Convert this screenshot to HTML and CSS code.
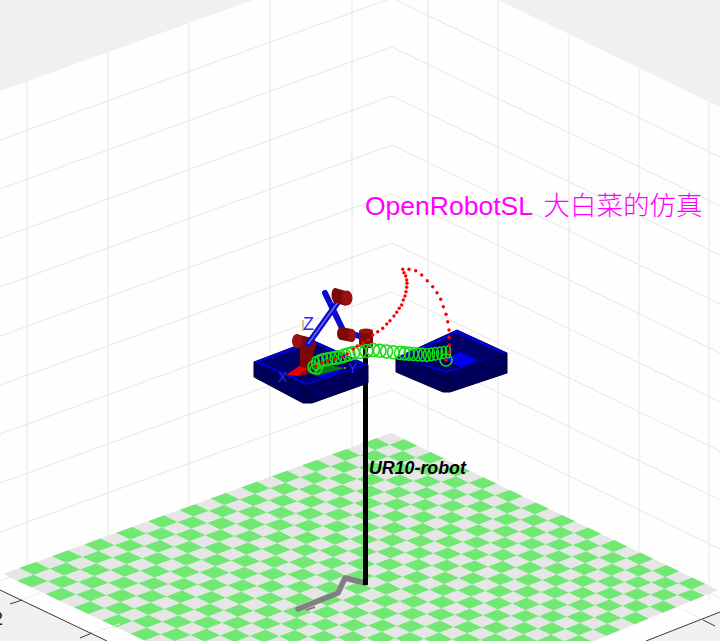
FILE: index.html
```html
<!DOCTYPE html>
<html>
<head>
    <title>OpenRobotSL</title>
    <link rel="stylesheet" href="styles.css">
</head>
<body>
    <svg class="plot" width="720" height="641" viewBox="0 0 720 641">
        <!-- grey outside of the axes box -->
        <polygon class="outside" points="0,0 253,0 0,91"/>
        <polygon class="outside" points="498,0 720,0 720,107"/>
        <polygon class="outside" points="0,590 107,641 0,641"/>
        <polygon class="outside" points="646,641 720,612 720,641"/>

        <g id="grid"></g>
        <g id="floor"></g>

        <!-- axis lines and ticks -->
        <line class="floor-grid" x1="22" y1="600" x2="40" y2="593"/>
        <line class="floor-grid" x1="92" y1="633" x2="120" y2="624"/>
        <line class="floor-grid" x1="703" y1="620" x2="683" y2="609"/>
        <line class="axis" x1="0" y1="590" x2="107" y2="641"/>
        <line class="axis" x1="10" y1="604" x2="22" y2="600"/>
        <line class="axis" x1="80" y1="638" x2="92" y2="633"/>
        <line class="axis" x1="646" y1="641" x2="720" y2="612"/>
        <line class="axis" x1="703" y1="620" x2="715" y2="626"/>
        <text class="tick-label" x="-7.5" y="625">2</text>

        <!-- shadow and pole -->
        <polyline class="shadow" points="298,609 338,593 345,578 365,583"/>
        <line class="shadow-foot" x1="306" y1="610" x2="315" y2="607"/>
        <rect class="pole" x="363" y="345" width="5" height="240"/>
        <text class="robot-label" x="369" y="474">UR10-robot</text>

        <!-- right tray -->
        <polygon class="tray-side" points="396,358 457,330 507,353 507,373 450,392 443,392 396,372"/>
        <polygon class="tray-rim" points="396,358 452,333 457,330 507,353 448,373 445,373"/>
        <polygon class="tray-inner" points="402,358.5 457,333 503,353.5 447,371"/>
        <polygon class="tray-bottom" points="445,359 460,352 478,360 460,367"/>
        <polyline class="tray-edge" points="396,358 445,373 445,392"/>
        <polyline class="tray-edge" points="448,373 448,392"/>
        <polyline class="tray-edge" points="448,373 507,353"/>

        <!-- left tray -->
        <polygon class="tray-side" points="254,362 312,340 368,365 368,383 312,403 303,403 254,377"/>
        <polygon class="tray-rim" points="254,362 312,340 368,365 308,385 305,385"/>
        <polygon class="tray-inner" points="260,362 313,343 362,365 307,383"/>
        <polygon class="tray-bottom" points="312,373 330,366 345,369 322,378"/>
        <polyline class="tray-edge" points="254,362 305,385 305,403"/>
        <polyline class="tray-edge" points="308,385 308,403"/>
        <polyline class="tray-edge" points="308,385 368,365"/>

        <!-- robot -->
        <polygon class="cone" points="286,375 305,362 312,373 298,376"/>
        <polygon class="cone-shade" points="298,376 309,367 312,373"/>
        <rect class="link-dark" x="300" y="345" width="13" height="21"/>
        <ellipse class="link-dark" cx="306" cy="365" rx="6.5" ry="3"/>
        <line class="z-stem" x1="303" y1="320" x2="303" y2="331"/>
        <polygon class="link-dark" points="296,334 312,338 312,352 296,348"/>
        <ellipse class="link" cx="297" cy="341" rx="5" ry="7"/>
        <ellipse class="link-dark" cx="312" cy="345" rx="4" ry="7"/>
        <line class="arm" x1="325" y1="293" x2="342" y2="328"/>
        <line class="arm" x1="308" y1="344" x2="338" y2="302"/>
        <line class="arm-light" x1="308" y1="344" x2="338" y2="302"/>
        <polygon class="link-dark" points="335,288 346,291 346,306 333,302"/>
        <ellipse class="link" cx="347" cy="298" rx="5.5" ry="7.5"/>
        <ellipse class="link-dark" cx="335" cy="295" rx="3.5" ry="7"/>
        <line class="arm" x1="350" y1="333" x2="362" y2="337"/>
        <polygon class="link-dark" points="341,327 352,329 352,342 341,340"/>
        <ellipse class="link-dark" cx="341" cy="333.5" rx="4" ry="6.5"/>
        <ellipse class="link" cx="352" cy="335.5" rx="4" ry="6.5"/>
        <rect class="link-dark" x="359" y="331" width="14" height="15"/>
        <ellipse class="link-dark" cx="366" cy="346" rx="7" ry="2.5"/>
        <ellipse class="link" cx="366" cy="331" rx="7" ry="2.5"/>

        <polygon class="tool" points="312,362 345,368 316,376"/>
        <circle class="tool-tip" cx="345" cy="368" r="1"/>
        <g id="trail"></g>

        <text class="axis-mark" x="303" y="330">Z</text>
        <text class="axis-mark axis-mark-small" x="348" y="373">Y</text>
        <text class="axis-mark axis-mark-small" x="278" y="382">X</text>

        <text class="title" x="365" y="215">OpenRobotSL<tspan class="title-cjk" x="543.5">大白菜的仿真</tspan></text>
    </svg>
    <script src="script.js"></script>
</body>
</html>
```

FILE: styles.css
```css
body {
    margin: 0;
    background-color: #fefefe;
    overflow: hidden;
}
.plot {
    display: block;
}
.outside {
    fill: #f0f0f0;
}
.grid-line {
    stroke: #e6e6e6;
    stroke-width: 1;
    fill: none;
}
.floor-grid {
    stroke: #ececec;
    stroke-width: 1;
}
.tile-light {
    fill: #e6e6e6;
}
.tile-green {
    fill: #70e873;
}
.axis {
    stroke: #3a3a3a;
    stroke-width: 1;
}
.tick-label {
    font-family: "Liberation Sans", Arial, sans-serif;
    font-size: 19px;
    fill: #262626;
}
.shadow {
    fill: none;
    stroke: #808080;
    stroke-width: 5.5;
    stroke-linejoin: round;
    stroke-linecap: round;
}
.shadow-foot {
    stroke: #808080;
    stroke-width: 2;
}
.pole {
    fill: #000000;
}
.robot-label {
    font-family: "Liberation Sans", Arial, sans-serif;
    font-size: 17.8px;
    font-weight: bold;
    font-style: italic;
    fill: #000000;
}
.tray-side {
    fill: #00005c;
    stroke: #00002e;
    stroke-width: 1;
}
.tray-rim {
    fill: #0000e6;
}
.tray-inner {
    fill: #000068;
}
.tray-bottom {
    fill: #0000f0;
}
.tray-edge {
    fill: none;
    stroke: #000030;
    stroke-width: 1;
}
.link {
    fill: #9c1010;
}
.link-dark {
    fill: #7c0808;
}
.cone {
    fill: #e80000;
}
.cone-shade {
    fill: #8a0000;
}
.arm {
    stroke: #0a0ac8;
    stroke-width: 6;
    stroke-linecap: round;
}
.arm-light {
    stroke: #6a6aff;
    stroke-width: 1.5;
}
.z-stem {
    stroke: #d8b060;
    stroke-width: 1.5;
}
.tool {
    fill: #0c7a12;
}
.tool-tip {
    fill: #e08020;
}
.ring {
    fill: none;
    stroke: #14dc14;
    stroke-width: 1.6;
}
.dot {
    fill: #ff0000;
}
.axis-mark {
    font-family: "Liberation Sans", Arial, sans-serif;
    font-size: 18px;
    fill: #2a2aff;
}
.axis-mark-small {
    font-size: 14px;
}
.title {
    font-family: "Liberation Sans", "Noto Sans CJK SC", sans-serif;
    font-size: 26.5px;
    fill: #ff00ff;
}
.title-cjk {
    font-family: "Noto Sans CJK SC", sans-serif;
    font-size: 26.5px;
    font-weight: 300;
}
```

FILE: script.js
```js
const NS = 'http://www.w3.org/2000/svg';

function add(parent, tag, attrs) {
    const el = document.createElementNS(NS, tag);
    for (const key in attrs) {
        el.setAttribute(key, attrs[key]);
    }
    parent.appendChild(el);
    return el;
}

// walls: horizontal lines meet in a chevron at x=392, 49px apart
const grid = document.getElementById('grid');
for (let k = 1; k <= 10; k++) {
    const y = -51 + 49 * k;
    add(grid, 'polyline', {
        class: 'grid-line',
        points: `0,${y + 142} 392,${y} 720,${y + 159}`
    });
}
[27, 108, 189, 270, 352].forEach(x => {
    add(grid, 'line', { class: 'grid-line', x1: x, y1: 91 - x * 0.36, x2: x, y2: 580 });
});
[428, 498, 569, 639, 709].forEach(x => {
    add(grid, 'line', { class: 'grid-line', x1: x, y1: (x - 392) * 0.484 - 51, x2: x, y2: 600 });
});

// floor: 25x25 checker mapped onto the four corners with a homography
const L = [3, 574], B = [391, 433], R = [718, 590], F = [354.5, 739];
const dx1 = B[0] - R[0], dx2 = F[0] - R[0], sx = L[0] - B[0] + R[0] - F[0];
const dy1 = B[1] - R[1], dy2 = F[1] - R[1], sy = L[1] - B[1] + R[1] - F[1];
const det = dx1 * dy2 - dx2 * dy1;
const g = (sx * dy2 - dx2 * sy) / det;
const h = (dx1 * sy - sx * dy1) / det;

function project(u, v) {
    const w = g * u + h * v + 1;
    const x = (B[0] - L[0] + g * B[0]) * u + (F[0] - L[0] + h * F[0]) * v + L[0];
    const y = (B[1] - L[1] + g * B[1]) * u + (F[1] - L[1] + h * F[1]) * v + L[1];
    return (x / w).toFixed(1) + ',' + (y / w).toFixed(1);
}

const floor = document.getElementById('floor');
const N = 25;
add(floor, 'polygon', { class: 'tile-light', points: [L, B, R, F].map(p => p.join(',')).join(' ') });
for (let i = 0; i < N; i++) {
    for (let j = 0; j < N; j++) {
        if ((i + j) % 2 === 1) {
            add(floor, 'polygon', {
                class: 'tile-green',
                points: [
                    project(i / N, j / N),
                    project((i + 1) / N, j / N),
                    project((i + 1) / N, (j + 1) / N),
                    project(i / N, (j + 1) / N)
                ].join(' ')
            });
        }
    }
}

// green rings: [x, y, rx, ry] along the tool path, right to left
const trail = document.getElementById('trail');
const stops = [
    [448, 352, 2.5, 6],
    [427, 355, 3.5, 6.5],
    [400, 353, 5.5, 6.5],
    [373, 350, 6.5, 6.5],
    [353, 353, 6.5, 6.5],
    [340, 357, 6, 6.5],
    [323, 360, 5, 6.5],
    [312, 365, 3.5, 7]
];
const steps = [5, 6, 4, 3, 3, 4, 3];
stops.slice(0, -1).forEach((a, s) => {
    const b = stops[s + 1];
    for (let t = 0; t < steps[s]; t++) {
        const f = t / steps[s];
        add(trail, 'ellipse', {
            class: 'ring',
            cx: a[0] + (b[0] - a[0]) * f,
            cy: a[1] + (b[1] - a[1]) * f,
            rx: a[2] + (b[2] - a[2]) * f,
            ry: a[3] + (b[3] - a[3]) * f
        });
    }
});
add(trail, 'circle', { class: 'ring', cx: 446, cy: 360, r: 6 });
add(trail, 'ellipse', { class: 'ring', cx: 313, cy: 367, rx: 5, ry: 6 });
add(trail, 'ellipse', { class: 'ring', cx: 316, cy: 369, rx: 6, ry: 5 });

// red waypoints
const dots = [
    [402.7, 269.3], [404, 272.7], [405.7, 276], [406.7, 280], [407, 283.3], [406.7, 287.3],
    [406, 291.7], [405, 296], [403.3, 300], [401.7, 305], [399.3, 308.3], [396.7, 312.3],
    [394, 316], [390, 320.7], [386.7, 324], [382.7, 328.3], [377.7, 331.7], [372.7, 335],
    [368.3, 340], [363.3, 342.7], [357.3, 346], [353.3, 349], [347.3, 354], [342.7, 356.7],
    [335, 359], [328, 361], [322, 363], [316, 366],
    [409, 269.3], [415.7, 270.7], [421.7, 275], [427.3, 280.7], [432.7, 286.7], [437, 292.7],
    [440.7, 299.3], [443.3, 306.7], [446, 314.3], [447.7, 321.7], [449, 330], [449, 337.3],
    [449.3, 345], [449, 351.7], [446, 360]
];
dots.forEach(d => {
    add(trail, 'circle', { class: 'dot', cx: d[0], cy: d[1], r: 1.7 });
});
```
